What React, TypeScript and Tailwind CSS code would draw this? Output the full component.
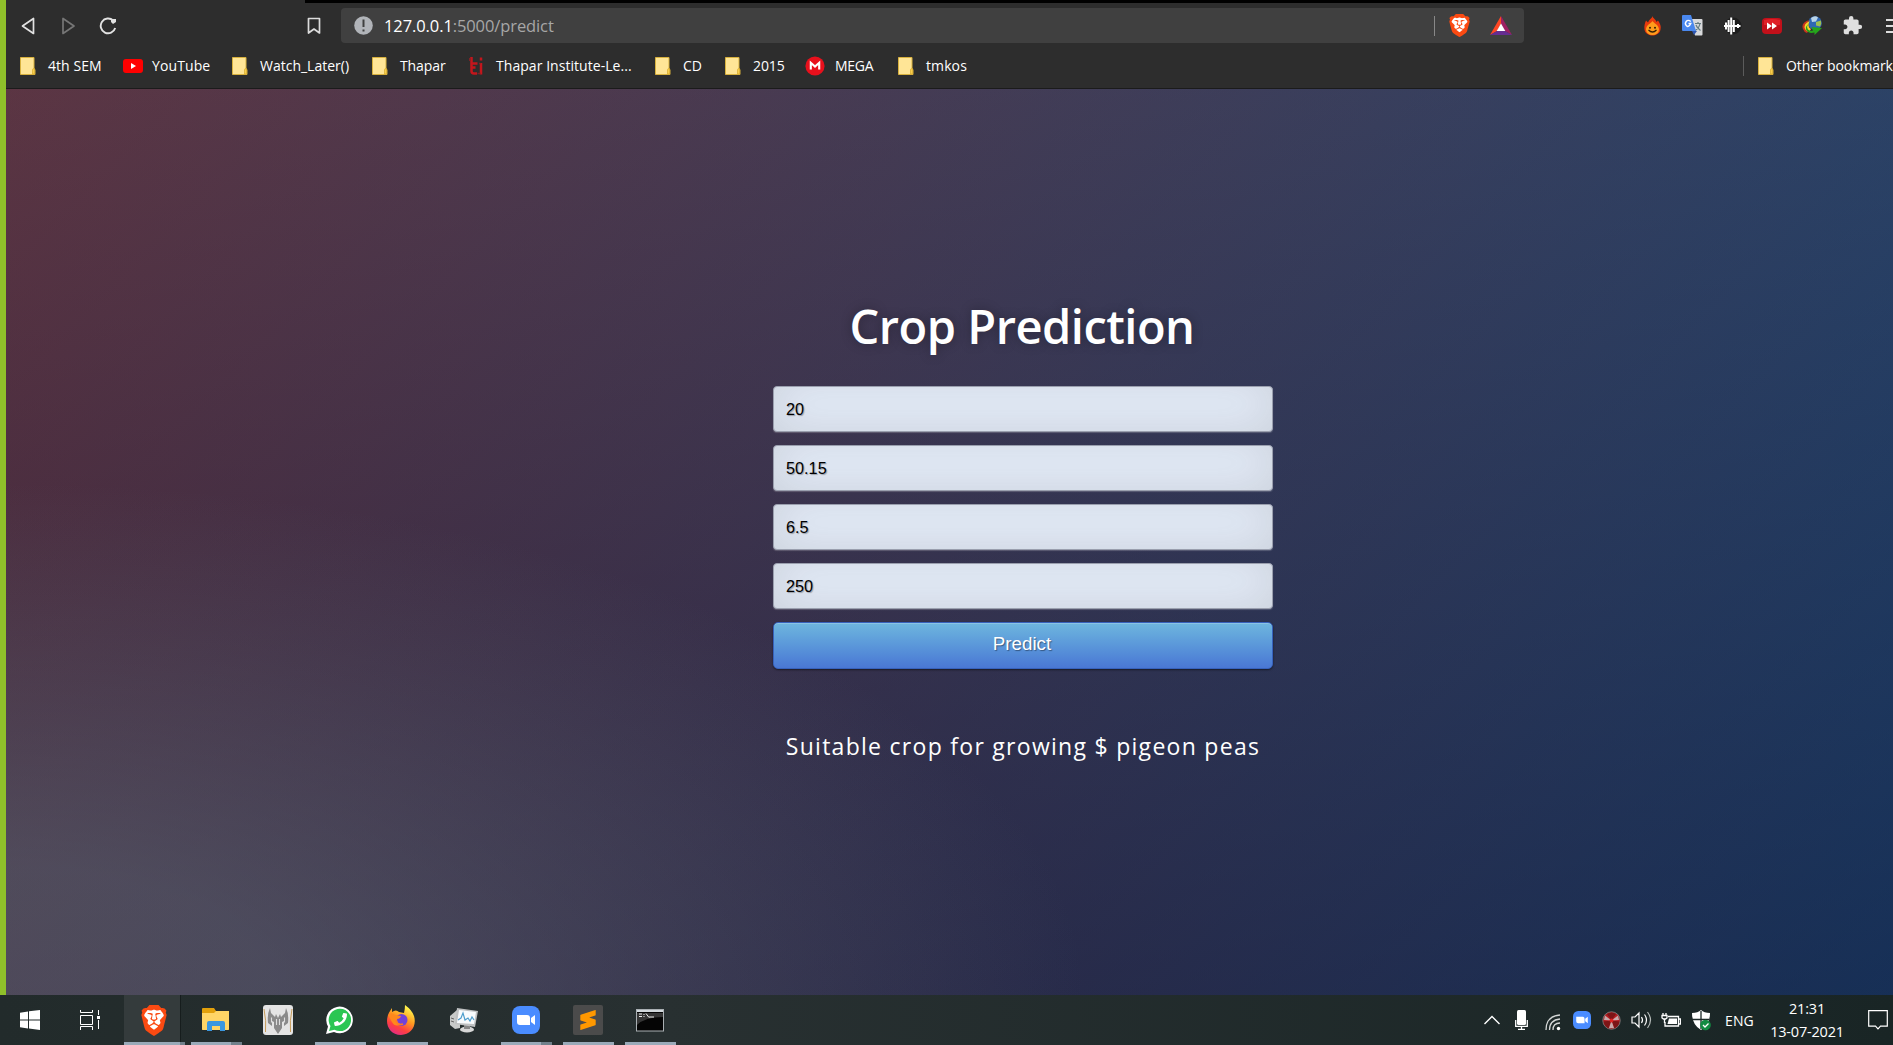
import React from "react";
import { SiBrave, SiSublimetext } from "react-icons/si";
import { FaFirefoxBrowser, FaPhoneAlt } from "react-icons/fa";
import { MdExtension } from "react-icons/md";

const Folder = () => (
  <svg width="16" height="18" viewBox="0 0 16 18" className="block shrink-0">
    <path d="M.5.5h13.500v12h1v5H.5z" fill="#ffe596" stroke="#d8b13e" />
    <path d="M12.500 17v-4q0-1.500 1.500-1.500h.5V17z" fill="#f8cf4d" stroke="#d8a92d" strokeWidth=".7" />
  </svg>
);

const YouTube = () => (
  <svg width="20" height="14" viewBox="0 0 20 14" className="block shrink-0">
    <rect width="20" height="14" rx="3" fill="#f00" />
    <path d="M8 4l5 3-5 3z" fill="#fff" />
  </svg>
);

const Thapar = () => (
  <svg width="14" height="18" viewBox="0 0 14 18" className="block shrink-0" fill="none">
    <path d="M2.500 0v14q0 2.500 2.500 2.500h3M3 6.500h5.500M3 10.500h3.500" stroke="#c4161c" strokeWidth="2.500" />
    <path d="M12 .5v3M12 6v11.500" stroke="#c4161c" strokeWidth="2.500" />
    <path d="M10 6.500h1.500M8.500 16.500h3M.5 1v3" stroke="#7d2226" strokeWidth="1.500" />
  </svg>
);

const Mega = () => (
  <svg width="20" height="20" viewBox="0 0 20 20" className="block shrink-0">
    <circle cx="10" cy="10" r="9.600" fill="#e8101c" />
    <path d="M5.800 13.500V6.800L10 10.600l4.200-3.800v6.700" fill="none" stroke="#fff" strokeWidth="2.100" />
  </svg>
);

function BraveLogo({ w, h }: { w: number; h: number }) {
  return (
    <svg width={w} height={h} viewBox="1.500 0 21 24" preserveAspectRatio="none" className="block shrink-0">
      <path d="M6 3h12l3 4-3 11-6 5-6-5L3 7z" fill="#fff" />
      <SiBrave size={24} color="#fb4a12" />
    </svg>
  );
}

function ZoomLogo({ s }: { s: number }) {
  return (
    <svg width={s} height={s} viewBox="0 0 28 28" className="block shrink-0">
      <rect width="28" height="28" rx="8" fill="#4a8cff" />
      <path d="M5 9h10q3 0 3 3v7H8q-3 0-3-3zM19 12l4-3v10l-4-3z" fill="#fff" />
    </svg>
  );
}

const Flame = () => (
  <svg width="17" height="20" viewBox="0 0 17 20" className="block">
    <path d="M8.500 0c0 2 3.500 3.500 4 6l1.500-1.500C17 9 17 11 16.500 13.500 16 17 12.500 19.500 8.500 19.500S1 17 .5 13.500C0 10 .8 7 2 4.500L4 6.500C5 3.500 8 2.500 8.500 0z" fill="#e8390c" />
    <path d="M8.500 5c1 2 6.500 4 6.500 8.500a6.500 5.600 0 0 1-13 0C2 9 7.500 7 8.500 5z" fill="#ff9c1b" />
    <circle cx="6" cy="11.700" r="1" fill="#352006" /><circle cx="11" cy="11.700" r="1" fill="#352006" />
    <path d="M4.500 14q4 4 8 0" fill="none" stroke="#352006" strokeWidth="1.200" />
  </svg>
);

const Translate = () => (
  <svg width="21" height="21" viewBox="0 0 21 21" className="block">
    <path d="M8 4h11.500q1 0 1 1v14.500q0 1-1 1H13z" fill="#d8d9db" />
    <path d="M13 8.500h6M16 7v1.500M18 8.500q-1 5-5 7M14 10q1 3 4.500 5.500" stroke="#637b80" strokeWidth="1.200" fill="none" />
    <path d="M10 16h5l-3 4z" fill="#2f56b0" />
    <path d="M1 0h8l5 16H1q-1 0-1-1V1q0-1 1-1z" fill="#4a88ee" />
    <path d="M8.800 6.500Q6 4.200 4.200 6.500T4.500 10.800t4.300-2.300H6.500" fill="none" stroke="#fff" strokeWidth="1.400" />
  </svg>
);

const Wave = () => (
  <svg width="18" height="20" viewBox="0 0 18 20" className="block">
    <circle cx="9" cy="10" r="8.500" fill="#1d1d1d" />
    <path d="M2 6.500v7M4.600 4v12M7.200 1.500v17M9.800 4v12M14 8v4" stroke="#fff" strokeWidth="2" />
    <path d="M0 10h16.500" stroke="#fff" strokeWidth="2" />
  </svg>
);

const FastForward = () => (
  <svg width="20" height="16" viewBox="0 0 20 16" className="block">
    <rect width="20" height="16" rx="4" fill="#c2101a" />
    <path d="M2 2q8-2 16 0v5H2z" fill="#df2028" />
    <path d="M5 4.500l5 3.500-5 3.500zM10 4.500l5 3.500-5 3.500z" fill="#fff" />
  </svg>
);

const Globe = () => (
  <svg width="21" height="19" viewBox="0 0 21 19" className="block">
    <circle cx="13" cy="7" r="6.800" fill="#2f67b4" />
    <path d="M9 2q4-3 7-.5l-2 4-4 .5z" fill="#b9d4e8" />
    <path d="M14 6l5-1.500q.8 3-1 6l-4-1z" fill="#9cbf52" />
    <path d="M7 4Q-1.500 7 1 13q1 3 4 4l2-3Q3 10 7 4z" fill="#c9351c" />
    <path d="M7.500 5Q1 8 3 13q1 2 4 3l2-3Q5 11 7.500 5z" fill="#f7d22a" />
    <path d="M7.500 7.500Q3.500 10 6 13.500q2 2 5 1l-1.500-3.500L20 12l-7.500 7v-2.500Q6 18 4 13.500 3 10 7.500 7.500z" fill="#25a51b" />
  </svg>
);

const bookmarks: { icon: React.ReactNode; label: string; slot: string; gap: string; text: string }[] = [
  { icon: <Folder />, label: "4th SEM", slot: "w-[103px]", gap: "w-[28px]", text: "tracking-[0.05px]" },
  { icon: <YouTube />, label: "YouTube", slot: "w-[109px]", gap: "w-[29px]", text: "tracking-[0.1px]" },
  { icon: <Folder />, label: "Watch_Later()", slot: "w-[140px]", gap: "w-[28px]", text: "tracking-[0px]" },
  { icon: <Folder />, label: "Thapar", slot: "w-[97px]", gap: "w-[28px]", text: "tracking-[-0.1px]" },
  { icon: <Thapar />, label: "Thapar Institute-Le...", slot: "w-[186px]", gap: "w-[27px]", text: "tracking-[0.05px]" },
  { icon: <Folder />, label: "CD", slot: "w-[70px]", gap: "w-[28px]", text: "tracking-[0px]" },
  { icon: <Folder />, label: "2015", slot: "w-[80px]", gap: "w-[28px]", text: "tracking-[-0.1px]" },
  { icon: <Mega />, label: "MEGA", slot: "w-[93px]", gap: "w-[30px]", text: "tracking-[-0.3px]" },
  { icon: <Folder />, label: "tmkos", slot: "w-[80px]", gap: "w-[28px]", text: "tracking-[0.1px]" },
];

function BrowserBar() {
  return (
    <header className="h-[89px] border-b border-[#1b1b1b] bg-[#2d2d2d] text-white">
      <div className="ml-[305px] h-[3px] bg-black" />
      <div className="flex h-[45px] items-center pl-[21px]">
        <svg width="14" height="18" viewBox="0 0 14 18" className="shrink-0" fill="none" stroke="#e2e2e2" strokeWidth="1.700" strokeLinejoin="round"><path d="M12.500 1.500v15L1.500 9z" /></svg>
        <svg width="14" height="18" viewBox="0 0 14 18" className="ml-[27px] shrink-0" fill="none" stroke="#767676" strokeWidth="1.700" strokeLinejoin="round"><path d="M1 1.500v15L12 9z" /></svg>
        <svg width="18" height="18" viewBox="0 0 18 18" className="ml-[23px] shrink-0" fill="none" stroke="#e2e2e2" strokeWidth="1.900"><path d="M14.200 3.500A7.400 7.400 0 1 0 16.200 11" /><path d="M12 2h5v3l-3 2-2-2z" fill="#e2e2e2" stroke="none" /></svg>
        <svg width="14" height="18" viewBox="0 0 14 18" className="ml-[190px] shrink-0" fill="none" stroke="#dcdcdc" strokeWidth="1.700"><path d="M1.500 1.500h11v14.500L7 12l-5.500 4z" strokeLinejoin="round" /></svg>
        <div className="ml-[20px] flex h-[35px] w-[1183px] shrink-0 items-center rounded bg-[#404040] pl-[13px]">
          <svg width="19" height="19" viewBox="0 0 19 19" className="shrink-0"><circle cx="9.500" cy="9.500" r="9.300" fill="#b1b4b9" /><path d="M9.500 3.500v7.500M9.500 13.500v2" stroke="#404040" strokeWidth="2" /></svg>
          <span className="ml-[11px] w-[1050px] font-['Open_Sans',sans-serif] text-[16.500px] leading-5 tracking-[-0.1px] whitespace-nowrap">127.0.0.1<span className="text-[#a7a7a7]">:5000/predict</span></span>
          <div className="h-5 w-px bg-[#888]" />
          <div className="ml-[14px]"><BraveLogo w={21} h={23} /></div>
          <svg width="22" height="19" viewBox="0 0 22 19" className="ml-[20px] shrink-0"><path d="M11 0L0 19l7-4 4-7z" fill="#ff4724" /><path d="M11 0l11 19-7-4-4-7z" fill="#9e1f63" /><path d="M0 19h22l-7-4H7z" fill="#662d91" /><path d="M11 7.500L15.300 15H6.700z" fill="#fff" /></svg>
        </div>
        <div className="ml-[120px] flex shrink-0 items-center">
          <div className="w-[38px]"><Flame /></div>
          <div className="w-[42px]"><Translate /></div>
          <div className="w-[38px]"><Wave /></div>
          <div className="w-[40px]"><FastForward /></div>
          <div className="w-[40px]"><Globe /></div>
          <div className="w-[44px]"><MdExtension size={21} color="#dfdfdf" /></div>
          <div className="flex w-5 flex-col gap-1"><i className="h-0.5 bg-[#ddd]" /><i className="h-0.5 bg-[#ddd]" /><i className="h-0.5 bg-[#ddd]" /></div>
        </div>
      </div>
      <div className="flex h-9 items-center pl-5 font-['Open_Sans',sans-serif] text-[14px] leading-5 whitespace-nowrap">
        {bookmarks.map((b) => (
          <div key={b.label} className={"flex shrink-0 items-center " + b.slot}>
            <div className={"shrink-0 " + b.gap}>{b.icon}</div>
            <span className={b.text}>{b.label}</span>
          </div>
        ))}
        <div className="ml-[765px] h-5 w-px shrink-0 bg-[#5b5b5b]" />
        <div className="ml-[14px] w-[28px] shrink-0"><Folder /></div>
        <span className="tracking-[-0.1px]">Other bookmark</span>
      </div>
    </header>
  );
}

function Page() {
  return (
    <main className="h-[906px] w-[1920px] bg-[#092756] bg-[radial-gradient(ellipse_farthest-corner_at_0%_100%,rgba(104,128,138,.4)_10%,rgba(138,114,76,0)_40%),linear-gradient(to_bottom,rgba(57,173,219,.25)_0%,rgba(42,60,87,.4)_100%),linear-gradient(135deg,#670d10_0%,#092756_100%)] pl-[773px] pt-[204px]">
      <div className="w-[500px]">
        <h1 className="flex h-[66px] items-center justify-center pr-[2px] font-['Open_Sans',sans-serif] text-[47px] font-semibold tracking-[-0.5px] whitespace-nowrap text-white [text-shadow:0_0_12px_rgba(0,0,0,.3)]">Crop Prediction</h1>
        <form className="mt-[27px] flex flex-col gap-[13px] font-['Liberation_Sans',sans-serif]">
          {["20", "50.15", "6.5", "250"].map((v) => (
            <input key={v} defaultValue={v} className="h-[46px] w-full rounded-[4px] border border-[#9a9fae] bg-[#e6eefb] px-3 text-[16.250px] text-black shadow-[inset_0_-5px_45px_rgba(100,100,100,.2),0_1px_1px_rgba(255,255,255,.2)] outline-none [text-shadow:1px_1px_1px_rgba(0,0,0,.3)]" />
          ))}
          <button type="button" className="h-[47px] w-full rounded-[5px] border border-[#3762bc] bg-linear-to-b from-[#6eb6de] to-[#4a77d4] pr-0.5 pb-0.5 text-[18.750px] text-white shadow-[inset_0_1px_0_rgba(255,255,255,.2),0_1px_2px_rgba(0,0,0,.5)] [text-shadow:1px_1px_1px_rgba(0,0,0,.4)]">Predict</button>
        </form>
        <p className="mt-[61px] text-center font-['Open_Sans',sans-serif] text-[23px] leading-8 tracking-[1.280px] whitespace-nowrap text-white">Suitable crop for growing $ pigeon peas</p>
      </div>
    </main>
  );
}

const WhatsApp = () => (
  <svg width="28" height="28" viewBox="0 0 28 28">
    <path d="M0 28l2-7.500A13.300 13.300 0 1 1 8 26z" fill="#fff" />
    <path d="M3 25l1.500-5A11.200 11.200 0 1 1 8.500 23.700z" fill="#2bc653" />
    <g transform="translate(21 7) scale(-1 1)"><FaPhoneAlt size={13} color="#fff" /></g>
  </svg>
);

const Explorer = () => (
  <svg width="28" height="24" viewBox="0 0 28 24">
    <path d="M0 1q0-1 1-1h11l2 3h12q1 0 1 1v17q0 1-1 1H1q-1 0-1-1z" fill="#e2a00b" />
    <path d="M0 5h12l2-2h13v18q0 1-1 1H1q-1 0-1-1z" fill="#ffd566" />
    <path d="M5 23v-8q0-2 2-2h14q2 0 2 2v8h-5v-5h-8v5z" fill="#3a97e0" />
  </svg>
);

const Predator = () => (
  <svg width="30" height="30" viewBox="0 0 30 30">
    <rect width="30" height="30" rx="3" fill="#e4e4e4" />
    <path d="M1 4q2.500 12 1.500 23M29 4q-2.500 12-1.500 23" stroke="#c79c59" fill="none" />
    <path d="M7 3l1 5 4 4 1-3 2 4 2-4 1 3 4-4 1-5q3 6 2 15l-4 3v-5l-2 1v6l-4 6-4-6v-6l-2-1v5l-4-3Q4 9 7 3z" fill="#8a8a8a" />
    <path d="M8.500 12.500v5M21.500 12.500v5M13.500 14v6M16.500 14v6" stroke="#dedede" strokeWidth="1.100" />
  </svg>
);

const Firefox = () => (
  <svg width="29" height="30" viewBox="0 0 29 30">
    <defs><linearGradient id="fox" x1=".8" y1="0" x2=".3" y2="1"><stop offset=".1" stopColor="#fff04a" /><stop offset=".45" stopColor="#ff9a20" /><stop offset=".75" stopColor="#ff4040" /><stop offset="1" stopColor="#e32b85" /></linearGradient></defs>
    <path d="M18 0q7 5 9 11c3 10-3 19-13 19C5 30 0 23 0 16 0 11 2 7 5 3v4q4-3 7 0l5 1q1-4 1-8z" fill="url(#fox)" />
    <circle cx="14.500" cy="15" r="6" fill="#7342d8" />
    <path d="M1 10q4-3 7 0l6 1q-1 3-4 3 0 5 5 5-7 4-10-2z" fill="#ff891c" />
    <path d="M9 15q1 6 7 4" stroke="#ff7b24" strokeWidth="1.500" fill="none" />
  </svg>
);

const Monitor = () => (
  <svg width="28" height="25" viewBox="0 0 28 25">
    <path d="M0 8l7-6 3 1v17l-5 1-5-4z" fill="#c8cac9" /><path d="M1 10l3 1M1 13l3 1" stroke="#666" />
    <ellipse cx="17" cy="21.500" rx="7" ry="3" fill="#d7d7d7" /><path d="M14 17h6v4h-6z" fill="#888" />
    <path d="M7 0l21 3-3 16L5 16z" fill="#bfc1c2" /><path d="M9 2l17 2-2 12-17-1z" fill="#f8fbfd" />
    <path d="M8 12l3-2 2-5 2 7 3-2 2 3 2-4 2 3" stroke="#4e9dcc" fill="none" strokeWidth="1.200" />
  </svg>
);

const Terminal = () => (
  <svg width="28" height="23" viewBox="0 0 28 23">
    <rect x=".5" y=".5" width="27" height="21.500" fill="#050505" stroke="#a9afb3" />
    <path d="M1 1h26v2H1z" fill="#d2d8dc" /><path d="M1 4h26v4Q9 8 1 16z" fill="#353535" />
    <path d="M3 5h3M3 7.500h3M8 5v1M8 7v1M10 4.500l3 4M13 8h5" stroke="#eee" />
  </svg>
);

const Sublime = () => (
  <div className="flex size-[30px] items-center justify-center rounded-[2px] bg-[#4b4b4b]"><SiSublimetext size={20} color="#ff9800" /></div>
);

const apps: { name: string; icon: React.ReactNode; line: string; extra: string; slot: string; active?: boolean }[] = [
  { name: "brave", icon: <BraveLogo w={26} h={31} />, line: "w-[56px]", extra: "w-[5px]", slot: "w-[61px] mr-[6px]", active: true },
  { name: "files", icon: <Explorer />, line: "w-[40px]", extra: "w-[11px]", slot: "w-[51px] mr-[11px]" },
  { name: "predator", icon: <Predator />, line: "w-0", extra: "w-0", slot: "w-[51px] mr-[11px]" },
  { name: "whatsapp", icon: <WhatsApp />, line: "w-[51px]", extra: "w-0", slot: "w-[51px] mr-[11px]" },
  { name: "firefox", icon: <Firefox />, line: "w-[51px]", extra: "w-0", slot: "w-[51px] mr-[11px]" },
  { name: "monitor", icon: <Monitor />, line: "w-0", extra: "w-0", slot: "w-[51px] mr-[11px]" },
  { name: "zoom", icon: <ZoomLogo s={28} />, line: "w-[40px]", extra: "w-[11px]", slot: "w-[51px] mr-[11px]" },
  { name: "sublime", icon: <Sublime />, line: "w-[51px]", extra: "w-0", slot: "w-[51px] mr-[11px]" },
  { name: "terminal", icon: <Terminal />, line: "w-[51px]", extra: "w-0", slot: "w-[51px]" },
];

function Tray() {
  return (
    <div className="ml-auto flex h-full w-[409px] shrink-0 items-center text-white">
      <svg width="16" height="10" viewBox="0 0 16 10" className="shrink-0" fill="none" stroke="#fff" strokeWidth="1.400"><path d="M.5 9L8 1.500 15.500 9" /></svg>
      <svg width="13" height="20" viewBox="0 0 13 20" className="ml-[15px] shrink-0"><rect x="2" width="9" height="15" rx="1.500" fill="#fff" /><path d="M.7 10v6.300h11.600V10M6.500 16v3M3 19.300h7" stroke="#fff" fill="none" strokeWidth="1.300" /></svg>
      <svg width="16" height="17" viewBox="0 0 16 17" className="ml-[17px] mt-1 shrink-0" fill="none" stroke="#d4d7d6" strokeWidth="1.300"><path d="M1 16Q1 2 15 1M4.500 16Q4.500 6 15 5M8 16q0-7 7-7" /><circle cx="13.500" cy="14.500" r="1.700" fill="#fff" stroke="none" /></svg>
      <div className="ml-[12px]"><ZoomLogo s={18} /></div>
      <svg width="19" height="19" viewBox="0 0 19 19" className="ml-[11px] shrink-0"><circle cx="9.500" cy="9.500" r="8.700" fill="#b51b20" stroke="#777" /><path d="M9.500 9.500L5 3q5-3 9 0zM9.500 9.500l8 1q-1 5-5 7zM9.500 9.500l-8 1q1 5 5 7z" fill="#7d1517" /><path d="M9.500 9.500L3 4.500 2 9zM9.500 9.500L16 4.500l1 4.500zM9.500 9.500L7 17h5z" fill="#ccc" opacity=".8" /><circle cx="9.500" cy="9.500" r="2" fill="#d22" /></svg>
      <svg width="21" height="18" viewBox="0 0 21 18" className="ml-[10px] shrink-0" fill="none" stroke="#fff" strokeWidth="1.200"><path d="M1 6h3l4-4v14l-4-4H1z" /><path d="M10.500 6q2 3 0 6" /><path d="M13.500 3.500q4 5.500 0 11" /><path d="M16.500 1q6 8 0 16" stroke="#b4bab8" /></svg>
      <svg width="20" height="15" viewBox="0 0 20 15" className="ml-[9px] shrink-0" fill="none" stroke="#fff" strokeWidth="1.300"><path d="M7 3.500h10.500V13H4V9M18 6h1.500v5H18" /><path d="M8 5.500h8V11H6.500z" fill="#fff" stroke="none" /><path d="M2 0v2M5 0v2M1 2.500h5V5L4.500 6h-2L1 5zM3.500 6v4" /></svg>
      <svg width="20" height="21" viewBox="0 0 20 21" className="ml-[10px] shrink-0"><path d="M10 0q3 3 9 3 0 12-9 17Q1 15 1 3q6 0 9-3z" fill="#fff" /><path d="M10 1v18M1 9.500h17" stroke="#1c2827" strokeWidth="1.300" /><circle cx="14.500" cy="15" r="5.300" fill="#128b42" /><path d="M12 15l2 2 3.500-3.500" stroke="#fff" fill="none" strokeWidth="1.300" /></svg>
      <span className="ml-[14px] w-[45px] shrink-0 font-['Open_Sans',sans-serif] text-[14px] tracking-[0.1px]">ENG</span>
      <div className="w-[74px] shrink-0 text-center font-['Open_Sans',sans-serif] text-[14.500px] leading-[23px] tracking-[-0.2px] whitespace-nowrap"><div>21:31</div><div>13-07-2021</div></div>
      <svg width="20" height="20" viewBox="0 0 20 20" className="ml-[24px] shrink-0" fill="none" stroke="#fff" strokeWidth="1.200"><path d="M.7.700h18.600v15.500h-6.800L10 18.800l-2.500-2.600H.7z" /></svg>
    </div>
  );
}

function Taskbar() {
  return (
    <footer className="flex h-[50px] items-center bg-linear-to-r from-[#222b2b] via-[#283031] via-35% to-[#192525]">
      <svg width="20" height="20" viewBox="0 0 20 20" className="ml-[20px] shrink-0" fill="#fff"><path d="M0 2.700L8 1.500v8H0zM9 1.300L20 0v9.500H9zM0 10.500h8v8L0 17.300zM9 10.500h11V20L9 18.600z" /></svg>
      <svg width="20" height="20" viewBox="0 0 20 20" className="ml-[40px] shrink-0" fill="none" stroke="#fff" strokeWidth="1"><path d="M.5 0v2.500h12V0M.5 20v-3.500h12V20M.5 5.500h12v9H.5zM18.500 0v5M18.500 10v9" /><path d="M17 6h3v3h-3z" fill="#fff" stroke="none" /></svg>
      <div className="ml-[24px] flex h-full">
        {apps.map((a) => (
          <div key={a.name} className={"flex h-full flex-col " + a.slot}>
            <div className={a.active ? "flex h-[47px] w-[57px] items-center justify-center border-r border-[#161d1d] bg-[#343b3c] pt-[3px] pl-[3px]" : "flex h-[47px] items-center justify-center pt-[3px] pr-[2px]"}>{a.icon}</div>
            <div className="flex h-[3px]"><div className={"bg-[#9aaab9] " + a.line} /><div className={"bg-[#71808b] " + a.extra} /></div>
          </div>
        ))}
      </div>
      <Tray />
    </footer>
  );
}

export default function App() {
  return (
    <div className="h-[1045px] w-[1893px] overflow-hidden">
      <div className="relative h-[995px] overflow-hidden">
        <BrowserBar />
        <Page />
        <div className="absolute top-0 left-0 h-full w-1.5 bg-[#8fc02a]" />
      </div>
      <Taskbar />
    </div>
  );
}
